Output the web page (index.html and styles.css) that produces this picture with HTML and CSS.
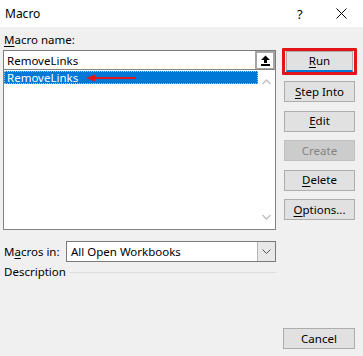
FILE: index.html
```html
<!DOCTYPE html>
<html lang="en">
<head>
    <meta charset="UTF-8">
    <title>Macro</title>
    <link rel="stylesheet" href="styles.css">
</head>
<body>

    <div class="dialog">
        <!-- Title bar -->
        <div class="titlebar">
            <span class="title">Macro</span>
            <span class="help">?</span>
            <svg class="close" width="11" height="11" viewBox="0 0 11 11">
                <path d="M0.5 0.5 L10.5 10.5 M10.5 0.5 L0.5 10.5" stroke="#000" stroke-width="1" fill="none"/>
            </svg>
        </div>

        <div class="body">
            <!-- Left side: name, list, location, description -->
            <div class="main">
                <label class="label"><u>M</u>acro name:</label>
                <div class="name-box">
                    <span class="name-text">RemoveLinks</span>
                    <span class="up-button">
                        <svg width="11" height="11" viewBox="0 0 11 11">
                            <path d="M5.5 0.5 L10 5 L7 5 L7 8 L4 8 L4 5 L1 5 Z" fill="#000"/>
                            <rect x="1" y="9" width="9" height="2" fill="#000"/>
                        </svg>
                    </span>
                </div>
                <div class="list-box">
                    <div class="list-items">
                        <div class="list-item selected">
                            <span>RemoveLinks</span>
                            <svg class="arrow" width="50" height="8" viewBox="0 0 50 8">
                                <path d="M0 4 L9 0.5 L9 3 L50 3 L50 5 L9 5 L9 7.5 Z" fill="#e3141b"/>
                            </svg>
                        </div>
                    </div>
                    <div class="scrollbar">
                        <svg width="9" height="6" viewBox="0 0 9 6">
                            <path d="M0.5 5 L4.5 1 L8.5 5" stroke="#bfbfbf" stroke-width="1.4" fill="none"/>
                        </svg>
                        <svg width="9" height="6" viewBox="0 0 9 6">
                            <path d="M0.5 1 L4.5 5 L8.5 1" stroke="#bfbfbf" stroke-width="1.4" fill="none"/>
                        </svg>
                    </div>
                </div>

                <div class="macros-in">
                    <label class="label">M<u>a</u>cros in:</label>
                    <div class="select">
                        <span class="select-text">All Open Workbooks</span>
                        <span class="select-button">
                            <svg width="9" height="5" viewBox="0 0 9 5">
                                <path d="M0.5 0.5 L4.5 4.5 L8.5 0.5" stroke="#555" stroke-width="1" fill="none"/>
                            </svg>
                        </span>
                    </div>
                </div>

                <div class="description">
                    <span class="label">Description</span>
                    <span class="rule"></span>
                </div>
            </div>

            <!-- Right side: command buttons -->
            <div class="buttons">
                <div class="run-highlight">
                    <button class="btn default"><u>R</u>un</button>
                </div>
                <button class="btn first"><u>S</u>tep Into</button>
                <button class="btn"><u>E</u>dit</button>
                <button class="btn" disabled>Create</button>
                <button class="btn"><u>D</u>elete</button>
                <button class="btn"><u>O</u>ptions...</button>
                <button class="btn cancel">Cancel</button>
            </div>
        </div>
    </div>

</body>
</html>
```

FILE: styles.css
```css
/* Windows style Macro dialog */
html, body {
    margin: 0;
    padding: 0;
}

body {
    width: 363px;
    height: 356px;
    overflow: hidden;
    background-color: #f0f0f0;
    font-family: "Noto Sans", "Open Sans", sans-serif;
    font-size: 11.5px;
    color: #000;
}

.dialog {
    display: flex;
    flex-direction: column;
    height: 356px;
}

u {
    text-decoration-thickness: 1px;
    text-underline-offset: 2px;
}

/* Title bar */
.titlebar {
    height: 27px;
    background-color: #fff;
    display: flex;
    align-items: center;
    padding-left: 5px;
}

.title {
    flex: 1;
    font-size: 12px;
}

.help {
    width: 12px;
    margin-right: 27px;
    font-size: 13px;
}

.close {
    margin-right: 16px;
}

/* Main area */
.body {
    flex: 1;
    display: flex;
    padding: 0 3px 0 3px;
}

.main {
    width: 273px;
    display: flex;
    flex-direction: column;
}

.label {
    line-height: 16px;
}

.main > .label {
    padding-left: 1px;
    margin-top: 5px;
    margin-bottom: 2px;
}

.name-box {
    height: 19px;
    box-sizing: border-box;
    border: 1px solid #7a7a7a;
    border-bottom: none;
    background-color: #fff;
    display: flex;
    align-items: center;
}

.name-text {
    flex: 1;
    padding-left: 3px;
}

.up-button {
    width: 20px;
    height: 18px;
    box-sizing: border-box;
    border: 2px solid #a5a5a5;
    border-bottom-width: 1px;
    background-color: #fff;
    display: flex;
    align-items: center;
    justify-content: center;
}

.list-box {
    height: 161px;
    box-sizing: border-box;
    border: 1px solid #828282;
    background-color: #fff;
    display: flex;
}

.list-items {
    flex: 1;
    padding-top: 1px;
}

.list-item {
    height: 13px;
    display: flex;
    align-items: center;
    padding-left: 3px;
    line-height: 13px;
}

.list-item.selected {
    background-color: #0078d7;
    color: #fff;
    outline: 1px dotted #9ec9f0;
    outline-offset: -1px;
}

.arrow {
    margin-left: 8px;
}

.scrollbar {
    width: 17px;
    display: flex;
    flex-direction: column;
    justify-content: space-between;
    align-items: center;
    padding: 9px 0 9px 0;
}

.macros-in {
    display: flex;
    align-items: center;
    margin-top: 11px;
}

.macros-in .label {
    width: 62px;
    padding-left: 1px;
}

.select {
    flex: 1;
    height: 21px;
    box-sizing: border-box;
    border: 1px solid #7a7a7a;
    background-color: #fff;
    display: flex;
    align-items: center;
}

.select-text {
    flex: 1;
    padding-left: 4px;
}

.select-button {
    width: 18px;
    height: 19px;
    box-sizing: border-box;
    border-left: 1px solid #b5b5b5;
    background-color: #e8e8e8;
    display: flex;
    align-items: center;
    justify-content: center;
}

.description {
    display: flex;
    align-items: center;
    margin-top: 2px;
    padding-left: 1px;
}

.rule {
    flex: 1;
    height: 1px;
    margin-left: 4px;
    background-color: #dcdcdc;
}

/* Buttons column */
.buttons {
    flex: 1;
    display: flex;
    flex-direction: column;
    align-items: flex-end;
    padding-top: 21px;
    padding-right: 3px;
}

.btn {
    width: 71px;
    height: 21px;
    box-sizing: border-box;
    margin-top: 8.5px;
    margin-right: 2px;
    border: 1px solid #adadad;
    background-color: #e1e1e1;
    font-family: "Noto Sans", "Open Sans", sans-serif;
    font-size: 11.5px;
    color: #000;
    padding: 0;
    line-height: 18px;
}

.btn.first {
    margin-top: 6px;
}

.btn:disabled {
    background-color: #cccccc;
    border-color: #bfbfbf;
    color: #838383;
}

.run-highlight {
    border: 3px solid #e3141b;
    border-radius: 1px;
    padding: 0 1px;
}

.run-highlight .btn {
    margin: 0;
    width: 67px;
    border-color: #adadad;
    border-bottom: 2px solid #0078d7;
}

.cancel {
    margin-top: auto;
    margin-bottom: 7px;
    width: 72px;
}
```
